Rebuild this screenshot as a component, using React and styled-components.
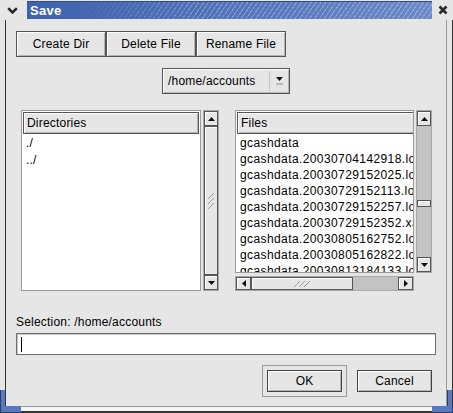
import React from "react";
import styled, { createGlobalStyle } from "styled-components";

const GlobalStyle = createGlobalStyle`
  html, body {
    margin: 0;
    padding: 0;
    background: #e6e6e6;
  }
  body {
    font-family: "Liberation Sans", Arial, sans-serif;
    font-size: 12px;
    letter-spacing: 0.2px;
    color: #000;
  }
  * {
    box-sizing: border-box;
  }
`;

const Window = styled.div`
  width: 453px;
  height: 413px;
  display: flex;
  flex-direction: column;
  background: #e6e6e6;
  overflow: hidden;
`;

const TitleBar = styled.div`
  height: 20px;
  display: flex;
  flex-shrink: 0;
  background: #e6e6e6;
`;

const MenuButton = styled.div`
  width: 27px;
  display: flex;
  align-items: center;
  justify-content: center;
  padding-right: 3px;
`;

const TitleArea = styled.div`
  flex: 1;
  display: flex;
  margin: 1px 0 1px;
  background: linear-gradient(to right, #3f62ad 0%, #4d6fb6 40%, #6a89c8 100%);
  border-top: 1px solid #2f4d8c;
`;

const TitleText = styled.div`
  padding: 0 10px 0 3px;
  color: #fff;
  font-weight: bold;
  font-size: 13px;
  letter-spacing: 0.3px;
  line-height: 17px;
`;

const Stripes = styled.div`
  flex: 1;
  background: repeating-linear-gradient(
    -55deg,
    rgba(255, 255, 255, 0.28) 0 1px,
    transparent 1px 4px
  );
  -webkit-mask-image: linear-gradient(to right, transparent 0%, #000 35%);
  mask-image: linear-gradient(to right, transparent 0%, #000 35%);
`;

const CloseButton = styled.div`
  width: 21px;
  display: flex;
  align-items: center;
  justify-content: center;
`;

const Frame = styled.div`
  flex: 1;
  display: flex;
  min-height: 0;
`;

const SideEdge = styled.div`
  width: ${(p) => p.$w}px;
  display: flex;
  flex-direction: column;
  justify-content: flex-end;
  align-items: ${(p) => (p.$right ? "flex-end" : "flex-start")};
  border-right: ${(p) => (p.$right ? "1px solid #333" : "none")};
`;

const BlueCap = styled.div`
  width: 5px;
  height: 16px;
  background: #5a78bd;
  border-left: 1px solid #2c3e66;
`;

const Content = styled.div`
  flex: 1;
  display: flex;
  flex-direction: column;
  padding: 11px 10px 0 10px;
  border-left: 1px solid #333;
  border-right: 1px solid #9c9c9c;
`;

const BottomFrame = styled.div`
  height: 7px;
  display: flex;
  flex-shrink: 0;
`;

const BottomCorner = styled.div`
  width: 21px;
  background: #5a78bd;
  border-bottom: 1px solid #2c3e66;
  border-left: ${(p) => (p.$right ? "none" : "1px solid #2c3e66")};
  border-right: ${(p) => (p.$right ? "1px solid #2c3e66" : "none")};
`;

const BottomMid = styled.div`
  flex: 1;
  background: #f4f4f4;
  border-top: 1px solid #9c9c9c;
  border-bottom: 2px solid #333;
`;

const ButtonRow = styled.div`
  display: flex;
  height: 26px;
`;

const PushButton = styled.div`
  width: 90px;
  height: 26px;
  display: flex;
  align-items: center;
  justify-content: center;
  border: 1px solid #555;
  background: #e6e6e6;
  box-shadow: inset 1px 1px #fff, inset -1px -1px #b4b4b4;
`;

const Combo = styled.div`
  width: 128px;
  height: 26px;
  margin: 11px auto 0;
  display: flex;
  border: 1px solid #555;
  background: #e6e6e6;
  box-shadow: inset 1px 1px #fff, inset -1px -1px #b4b4b4;
`;

const ComboText = styled.div`
  flex: 1;
  padding-left: 5px;
  line-height: 24px;
`;

const ComboArrow = styled.div`
  width: 20px;
  margin: 2px 0;
  border-left: 1px solid #c4c4c4;
  display: flex;
  align-items: center;
  justify-content: center;
`;

const ListsRow = styled.div`
  margin-top: 16px;
  padding-left: 5px;
  display: flex;
  gap: 16px;
  height: 181px;
`;

const DirGroup = styled.div`
  width: 198px;
  display: flex;
  gap: 2px;
`;

const FilesGroup = styled.div`
  width: 197px;
  display: grid;
  grid-template-columns: 179px 16px;
  grid-template-rows: 163px 15px;
  column-gap: 2px;
  row-gap: 3px;
`;

const ListBox = styled.div`
  flex: 1;
  min-width: 0;
  border: 1px solid #9a9a9a;
  background: #fff;
  padding: 1px;
  overflow: hidden;
  display: flex;
  flex-direction: column;
`;

const ColumnHeader = styled.div`
  height: 22px;
  flex-shrink: 0;
  width: ${(p) => (p.$wide ? "260px" : "auto")};
  margin-bottom: 1px;
  padding-left: 3px;
  line-height: 20px;
  border: 1px solid #555;
  background: #e6e6e6;
  box-shadow: inset 1px 1px #fff, inset -1px -1px #b4b4b4;
  white-space: nowrap;
`;

const Row = styled.div`
  line-height: ${(p) => p.$pitch}px;
  height: ${(p) => p.$pitch}px;
  flex-shrink: 0;
  padding-left: ${(p) => p.$indent}px;
  letter-spacing: ${(p) => (p.$wide ? "0.4px" : "0.2px")};
  white-space: nowrap;
`;

const VScroll = styled.div`
  width: 16px;
  display: flex;
  flex-direction: column;
  border: 1px solid #a8a8a8;
`;

const HScroll = styled.div`
  grid-column: 1;
  display: flex;
  border: 1px solid #a8a8a8;
`;

const ScrollArrow = styled.div`
  flex: 0 0 15px;
  display: flex;
  align-items: center;
  justify-content: center;
  border: 1px solid #555;
  background: #e6e6e6;
  box-shadow: inset 1px 1px #fff;
`;

const Trough = styled.div`
  flex: 1;
  display: flex;
  flex-direction: ${(p) => (p.$horizontal ? "row" : "column")};
  background: ${(p) => p.$bg};
`;

const Thumb = styled.div`
  flex: ${(p) => (p.$size ? `0 0 ${p.$size}px` : "1")};
  display: flex;
  align-items: center;
  justify-content: center;
  border: 1px solid #555;
  background: #e6e6e6;
  box-shadow: inset 1px 1px #fff;
`;

const SelectionLabel = styled.div`
  margin-top: 24px;
  line-height: 14px;
`;

const TextEntry = styled.div`
  margin-top: 4px;
  height: 22px;
  display: flex;
  align-items: center;
  padding-left: 4px;
  background: #fff;
  border: 1px solid #6e6e6e;
  box-shadow: inset 1px 1px #c8c8c8;
`;

const Caret = styled.div`
  width: 1px;
  height: 15px;
  background: #000;
`;

const ActionRow = styled.div`
  margin-top: 10px;
  height: 32px;
  display: flex;
  align-items: center;
  justify-content: flex-end;
  gap: 10px;
  padding-right: 4px;
`;

const DefaultFrame = styled.div`
  border: 1px solid #9a9a9a;
  padding: 4px;
`;

const DialogButton = styled.div`
  width: 75px;
  height: 22px;
  display: flex;
  align-items: center;
  justify-content: center;
  border: 1px solid #444;
  background: #e6e6e6;
  box-shadow: inset 1px 1px #fff, inset -1px -1px #b4b4b4;
`;

const Arrow = ({ dir }) => {
  const pts = {
    up: "0,4 3.5,0 7,4",
    down: "0,0 3.5,4 7,0",
    left: "4,0 0,3.5 4,7",
    right: "0,0 4,3.5 0,7",
  }[dir];
  const vertical = dir === "up" || dir === "down";
  return (
    <svg width={vertical ? 7 : 4} height={vertical ? 4 : 7}>
      <polygon points={pts} fill="#111" />
    </svg>
  );
};

const Grip = ({ horizontal }) =>
  horizontal ? (
    <svg width="20" height="8">
      {[0, 5, 10].map((o) => (
        <line key={o} x1={2 + o} y1="7" x2={8 + o} y2="1" stroke="#9a9a9a" />
      ))}
    </svg>
  ) : (
    <svg width="8" height="20">
      {[0, 5, 10].map((o) => (
        <line key={o} x1="1" y1={8 + o} x2="7" y2={2 + o} stroke="#9a9a9a" />
      ))}
    </svg>
  );

const files = [
  "gcashdata",
  "gcashdata.20030704142918.log",
  "gcashdata.20030729152025.log",
  "gcashdata.20030729152113.log",
  "gcashdata.20030729152257.log",
  "gcashdata.20030729152352.xac",
  "gcashdata.20030805162752.log",
  "gcashdata.20030805162822.log",
  "gcashdata.20030813184133.log",
];

export default function App() {
  return (
    <>
      <GlobalStyle />
      <Window>
        <TitleBar>
          <MenuButton>
            <svg width="11" height="7">
              <path d="M1.2 1.2 L5.5 5.5 L9.8 1.2" stroke="#2a2a2a" strokeWidth="2.6" fill="none" />
            </svg>
          </MenuButton>
          <TitleArea>
            <TitleText>Save</TitleText>
            <Stripes />
          </TitleArea>
          <CloseButton>
            <svg width="10" height="10">
              <path d="M1.5 1.5 L8.5 8.5 M8.5 1.5 L1.5 8.5" stroke="#2a2a2a" strokeWidth="2.6" />
            </svg>
          </CloseButton>
        </TitleBar>

        <Frame>
          <SideEdge $w={5}>
            <BlueCap />
          </SideEdge>
          <Content>
            <ButtonRow>
              <PushButton>Create Dir</PushButton>
              <PushButton>Delete File</PushButton>
              <PushButton>Rename File</PushButton>
            </ButtonRow>

            <Combo>
              <ComboText>/home/accounts</ComboText>
              <ComboArrow>
                <svg width="7" height="9">
                  <polygon points="0,0 3.5,4 7,0" fill="#111" />
                  <rect x="0" y="6" width="7" height="2" fill="#b8b8b8" />
                </svg>
              </ComboArrow>
            </Combo>

            <ListsRow>
              <DirGroup>
                <ListBox>
                  <ColumnHeader>Directories</ColumnHeader>
                  <Row $pitch={17} $indent={3}>./</Row>
                  <Row $pitch={17} $indent={3}>../</Row>
                </ListBox>
                <VScroll>
                  <ScrollArrow>
                    <Arrow dir="up" />
                  </ScrollArrow>
                  <Trough $bg="#e6e6e6">
                    <Thumb>
                      <Grip />
                    </Thumb>
                  </Trough>
                  <ScrollArrow>
                    <Arrow dir="down" />
                  </ScrollArrow>
                </VScroll>
              </DirGroup>

              <FilesGroup>
                <ListBox>
                  <ColumnHeader $wide>Files</ColumnHeader>
                  {files.map((f) => (
                    <Row key={f} $pitch={16} $indent={3} $wide>
                      {f}
                    </Row>
                  ))}
                </ListBox>
                <VScroll>
                  <ScrollArrow>
                    <Arrow dir="up" />
                  </ScrollArrow>
                  <Trough $bg="#c3c3c3">
                    <Thumb $size={7} style={{ marginTop: 74 }} />
                  </Trough>
                  <ScrollArrow>
                    <Arrow dir="down" />
                  </ScrollArrow>
                </VScroll>
                <HScroll>
                  <ScrollArrow>
                    <Arrow dir="left" />
                  </ScrollArrow>
                  <Trough $bg="#c3c3c3" $horizontal>
                    <Thumb $size={102}>
                      <Grip horizontal />
                    </Thumb>
                  </Trough>
                  <ScrollArrow>
                    <Arrow dir="right" />
                  </ScrollArrow>
                </HScroll>
              </FilesGroup>
            </ListsRow>

            <SelectionLabel>Selection: /home/accounts</SelectionLabel>
            <TextEntry>
              <Caret />
            </TextEntry>

            <ActionRow>
              <DefaultFrame>
                <DialogButton>OK</DialogButton>
              </DefaultFrame>
              <DialogButton>Cancel</DialogButton>
            </ActionRow>
          </Content>
          <SideEdge $w={6} $right>
            <BlueCap />
          </SideEdge>
        </Frame>

        <BottomFrame>
          <BottomCorner />
          <BottomMid />
          <BottomCorner $right />
        </BottomFrame>
      </Window>
    </>
  );
}
